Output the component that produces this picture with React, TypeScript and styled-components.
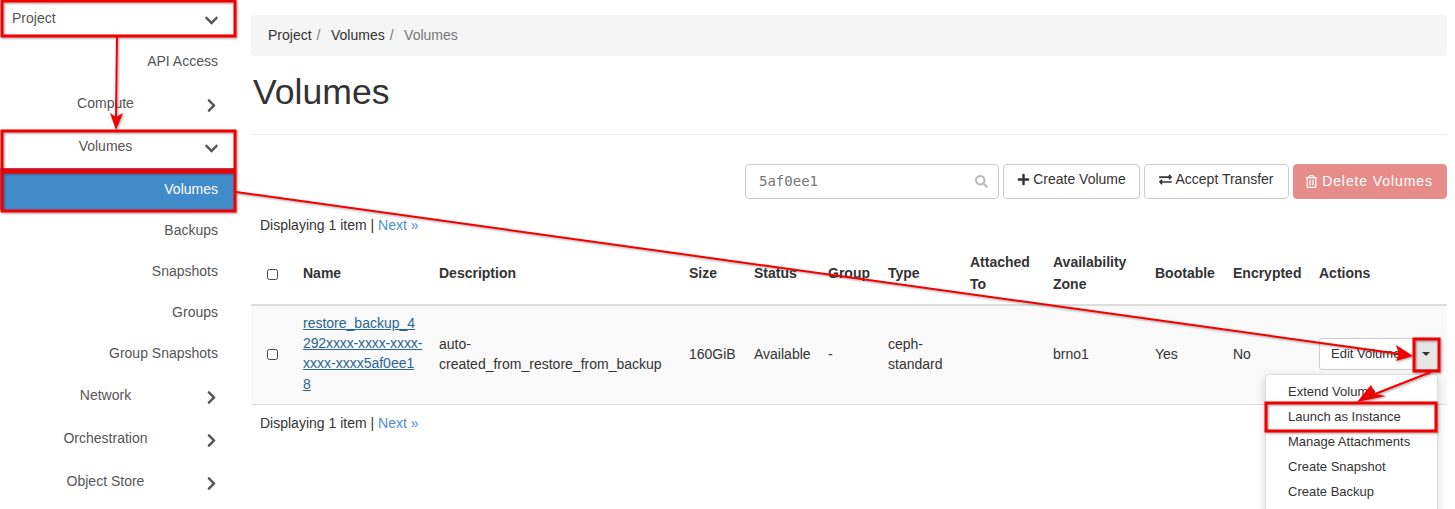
import { FaChevronDown, FaChevronRight, FaExchangeAlt, FaPlus, FaRegTrashAlt, FaSearch } from "react-icons/fa";
import styled, { createGlobalStyle } from "styled-components";

const GlobalStyle = createGlobalStyle`
    html, body {
        margin: 0;
        padding: 0;
        height: 509px;
        overflow: hidden;
        background: #fff;
    }
    body {
        font-family: "Liberation Sans", Arial, sans-serif;
        font-size: 14px;
        line-height: 20.4px;
        color: #333;
    }
`;

const Page = styled.div`
    position: relative;
    display: flex;
    width: 1455px;
    height: 509px;
    overflow: hidden;
`;

const Sidebar = styled.nav`
    flex: none;
    width: 236px;
    margin-right: 15px;
    display: flex;
    flex-direction: column;
`;

const NavRow = styled.div<{ $h: number; $gap?: number; $active?: boolean; $leaf?: boolean }>`
    flex: none;
    height: ${p => p.$h}px;
    margin-bottom: ${p => p.$gap || 0}px;
    display: flex;
    align-items: center;
    box-sizing: border-box;
    padding-right: 18px;
    justify-content: ${p => (p.$leaf ? "flex-end" : "flex-start")};
    background: ${p => (p.$active ? "#428bca" : "transparent")};
    color: ${p => (p.$active ? "#fff" : "#555")};
`;

const NavLabel = styled.span<{ $left?: boolean }>`
    flex: none;
    width: 211px;
    text-align: ${p => (p.$left ? "left" : "center")};
    padding-left: ${p => (p.$left ? "12px" : "0")};
    box-sizing: border-box;
`;

const NavIcon = styled.span`
    display: flex;
    justify-content: center;
    width: 16px;
    margin-left: -7px;
    color: #555;
    font-size: 15px;
    margin-top: 3px;
`;

const Main = styled.main`
    flex: none;
    width: 1196px;
    display: flex;
    flex-direction: column;
    padding-top: 15px;
`;

const Breadcrumb = styled.ol`
    display: flex;
    align-items: center;
    height: 41px;
    margin: 0;
    padding: 0 17px;
    list-style: none;
    background: #f5f5f5;
    border-radius: 4px;
`;

const Crumb = styled.li<{ $muted?: boolean }>`
    color: ${p => (p.$muted ? "#777" : "#333")};
    margin-top: -1px;
`;

const CrumbSep = styled.li`
    color: #777;
    margin-top: -1px;
    padding: 0 10.5px 0 5px;
`;

const Heading = styled.h1`
    margin: 16px 0 0 2px;
    height: 62px;
    font-size: 35.6px;
    font-weight: 400;
    line-height: 40px;
    color: #333;
`;

const Rule = styled.div`
    height: 1px;
    background: #eee;
`;

const Toolbar = styled.div`
    display: flex;
    justify-content: flex-end;
    gap: 4px;
    margin-top: 29px;
    height: 35px;
`;

const SearchBox = styled.div`
    box-sizing: border-box;
    width: 254px;
    height: 35px;
    border: 1px solid #ccc;
    border-radius: 4px;
    display: flex;
    align-items: center;
    justify-content: space-between;
    padding: 0 10px 0 13px;
    font-family: "DejaVu Sans Mono", "Liberation Mono", monospace;
    font-size: 14px;
    color: #777;
    svg {
        color: #bbb;
        font-size: 13px;
    }
`;

const Button = styled.button<{ $danger?: boolean; $w: number }>`
    box-sizing: border-box;
    width: ${p => p.$w}px;
    height: 35px;
    display: flex;
    align-items: center;
    justify-content: center;
    gap: ${p => (p.$danger ? "4px" : "3px")};
    padding: ${p => (p.$danger ? "0 2px 0 0" : "0 0 4px 0")};
    font: inherit;
    border-radius: 4px;
    border: 1px solid ${p => (p.$danger ? "#e68d8b" : "#ccc")};
    background: ${p => (p.$danger ? "#e68d8b" : "#fff")};
    color: ${p => (p.$danger ? "#fff" : "#333")};
    letter-spacing: ${p => (p.$danger ? "0.9px" : "0")};
    svg {
        font-size: 13px;
    }
`;

const Pager = styled.div<{ $top: number }>`
    margin-top: ${p => p.$top}px;
    margin-left: 9px;
`;

const NextLink = styled.a`
    color: #4a90d0;
    text-decoration: none;
`;

const Table = styled.table`
    table-layout: fixed;
    width: 1196px;
    margin-top: 9px;
    border-collapse: collapse;
    th, td {
        text-align: left;
        vertical-align: middle;
        line-height: 20.4px;
    }
    th {
        padding: 8px;
        font-weight: 700;
        line-height: 21.6px;
        border-bottom: 2px solid #ddd;
    }
    td {
        padding: 7px 8px 9px;
        background: #f9f9f9;
        border-bottom: 1px solid #ddd;
    }
    td > span {
        margin-top: 2px;
    }
`;

const Check = styled.span`
    display: block;
    box-sizing: border-box;
    width: 11px;
    height: 11px;
    margin-left: 8px;
    border: 1px solid #444;
    border-radius: 2.5px;
    background: #fff;
`;

const NameCell = styled.td`
    && {
        padding-bottom: 10px;
    }
`;

const NameLink = styled.a<{ $tight?: boolean }>`
    color: #2a6496;
    text-decoration: underline;
    white-space: nowrap;
    letter-spacing: ${p => (p.$tight ? "-0.12px" : "0")};
`;

const ActionCell = styled.td`
    position: relative;
`;

const ActionGroup = styled.div`
    display: flex;
    width: 120px;
    height: 32px;
`;

const EditButton = styled.div`
    box-sizing: border-box;
    flex: 1;
    padding-left: 11px;
    line-height: 29px;
    font-size: 13px;
    background: #fff;
    border: 1px solid #ccc;
    border-radius: 3px 0 0 3px;
    white-space: nowrap;
    overflow: hidden;
`;

const CaretButton = styled.div`
    box-sizing: border-box;
    flex: none;
    width: 25px;
    display: flex;
    align-items: center;
    justify-content: center;
    background: #e6e6e6;
    border: 1px solid #adadad;
    border-left: 0;
    border-radius: 0 3px 3px 0;
    &::after {
        content: "";
        border-top: 4px solid #333;
        border-left: 4px solid transparent;
        border-right: 4px solid transparent;
    }
`;

const Menu = styled.ul`
    position: absolute;
    left: -46px;
    top: 68px;
    z-index: 2;
    box-sizing: border-box;
    width: 173px;
    margin: 0;
    padding: 4px 0 30px;
    list-style: none;
    background: #fff;
    border: 1px solid #ddd;
    border-radius: 4px;
    box-shadow: 0 3px 8px rgba(0, 0, 0, 0.17);
`;

const MenuItem = styled.li`
    height: 25.2px;
    line-height: 25.2px;
    padding-left: 22px;
    font-size: 13px;
    color: #333;
`;

// red markup drawn on the screenshot
const Markup = styled.svg`
    position: absolute;
    inset: 0;
    z-index: 5;
    pointer-events: none;
`;

const marks = [
    [2, 1, 233, 35],
    [2, 131, 233, 39],
    [2, 172, 233, 39],
    [1414, 339, 25, 32],
    [1266, 403, 170, 28],
];

function Annotations() {
    return (
        <Markup width="1455" height="509" viewBox="0 0 1455 509">
            <defs>
                <filter id="sh" x="-5%" y="-5%" width="110%" height="110%">
                    <feDropShadow dx="1" dy="1" stdDeviation="1" floodColor="#000" floodOpacity="0.4" />
                </filter>
            </defs>
            <g filter="url(#sh)" fill="none" stroke="#f00000" strokeWidth="3">
                {marks.map(([x, y, w, h]) => <rect key={`${x}-${y}`} x={x} y={y} width={w} height={h} />)}
                <path strokeWidth="2" d="M117 36L116 118M236 192L1400 354M1431 372L1375 394" />
                <path stroke="none" fill="#f00000" d="M110 113L116 130L123 113L116 117ZM1413 356L1396 345L1399 354L1396 361ZM1357 402L1371 385L1375 394L1386 396Z" />
            </g>
        </Markup>
    );
}

export default function App() {
    return (
        <Page>
            <GlobalStyle />
            <Sidebar>
                <NavRow $h={37} $gap={4}>
                    <NavLabel $left>Project</NavLabel>
                    <NavIcon><FaChevronDown /></NavIcon>
                </NavRow>
                <NavRow $h={41} $leaf>API Access</NavRow>
                <NavRow $h={43}>
                    <NavLabel>Compute</NavLabel>
                    <NavIcon><FaChevronRight /></NavIcon>
                </NavRow>
                <NavRow $h={43}>
                    <NavLabel>Volumes</NavLabel>
                    <NavIcon><FaChevronDown /></NavIcon>
                </NavRow>
                <NavRow $h={42} $leaf $active>Volumes</NavRow>
                <NavRow $h={41} $leaf>Backups</NavRow>
                <NavRow $h={41} $leaf>Snapshots</NavRow>
                <NavRow $h={41} $leaf>Groups</NavRow>
                <NavRow $h={41} $leaf>Group Snapshots</NavRow>
                <NavRow $h={43}>
                    <NavLabel>Network</NavLabel>
                    <NavIcon><FaChevronRight /></NavIcon>
                </NavRow>
                <NavRow $h={43}>
                    <NavLabel>Orchestration</NavLabel>
                    <NavIcon><FaChevronRight /></NavIcon>
                </NavRow>
                <NavRow $h={43}>
                    <NavLabel>Object Store</NavLabel>
                    <NavIcon><FaChevronRight /></NavIcon>
                </NavRow>
            </Sidebar>
            <Main>
                <Breadcrumb>
                    <Crumb>Project</Crumb>
                    <CrumbSep>/</CrumbSep>
                    <Crumb>Volumes</Crumb>
                    <CrumbSep>/</CrumbSep>
                    <Crumb $muted>Volumes</Crumb>
                </Breadcrumb>
                <Heading>Volumes</Heading>
                <Rule />
                <Toolbar>
                    <SearchBox>5af0ee1<FaSearch /></SearchBox>
                    <Button $w={137}><FaPlus />Create Volume</Button>
                    <Button $w={145}><FaExchangeAlt />Accept Transfer</Button>
                    <Button $w={154} $danger><FaRegTrashAlt />Delete Volumes</Button>
                </Toolbar>
                <Pager $top={16}>Displaying 1 item | <NextLink>Next »</NextLink></Pager>
                <Table>
                    <colgroup>
                        {[44, 136, 250, 65, 74, 60, 82, 83, 102, 78, 86, 136].map((w, i) => <col key={i} width={w} />)}
                    </colgroup>
                    <thead>
                        <tr>
                            <th><Check /></th>
                            <th>Name</th>
                            <th>Description</th>
                            <th>Size</th>
                            <th>Status</th>
                            <th>Group</th>
                            <th>Type</th>
                            <th>Attached To</th>
                            <th>Availability Zone</th>
                            <th>Bootable</th>
                            <th>Encrypted</th>
                            <th>Actions</th>
                        </tr>
                    </thead>
                    <tbody>
                        <tr>
                            <td><Check /></td>
                            <NameCell>
                                <NameLink>restore_backup_4</NameLink><br />
                                <NameLink $tight>292xxxx-xxxx-xxxx-</NameLink><br />
                                <NameLink>xxxx-xxxx5af0ee1</NameLink><br />
                                <NameLink>8</NameLink>
                            </NameCell>
                            <td>auto-<br />created_from_restore_from_backup</td>
                            <td>160GiB</td>
                            <td>Available</td>
                            <td>-</td>
                            <td>ceph-<br />standard</td>
                            <td></td>
                            <td>brno1</td>
                            <td>Yes</td>
                            <td>No</td>
                            <ActionCell>
                                <ActionGroup>
                                    <EditButton>Edit Volume</EditButton>
                                    <CaretButton />
                                </ActionGroup>
                                <Menu>
                                    <MenuItem>Extend Volume</MenuItem>
                                    <MenuItem>Launch as Instance</MenuItem>
                                    <MenuItem>Manage Attachments</MenuItem>
                                    <MenuItem>Create Snapshot</MenuItem>
                                    <MenuItem>Create Backup</MenuItem>
                                </Menu>
                            </ActionCell>
                        </tr>
                    </tbody>
                </Table>
                <Pager $top={8}>Displaying 1 item | <NextLink>Next »</NextLink></Pager>
            </Main>
            <Annotations />
        </Page>
    );
}
